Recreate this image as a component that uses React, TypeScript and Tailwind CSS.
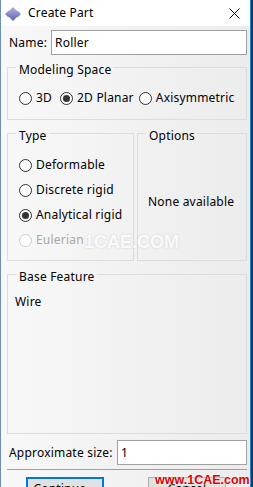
import React from 'react';

type RadioProps = { label: string; checked?: boolean; disabled?: boolean };

function Radio({ label, checked, disabled }: RadioProps) {
  return (
    <div className="flex items-center h-[16px] gap-[4px]">
      <span
        className={`w-[13px] h-[13px] rounded-full border bg-white flex items-center justify-center shrink-0 ${
          disabled ? 'border-[#cccccc]' : 'border-[#333333]'
        }`}
      >
        {checked && <span className="w-[7px] h-[7px] rounded-full bg-[#333333]" />}
      </span>
      <span className={`whitespace-nowrap ${disabled ? 'text-[#a8a8a8]' : 'text-black'}`}>{label}</span>
    </div>
  );
}

function Legend({ children }: { children: React.ReactNode }) {
  return <legend className="pl-[3px] pr-[2px] pt-[6px] leading-[16px] text-black">{children}</legend>;
}

function PartIcon() {
  return (
    <svg width="16" height="14" viewBox="0 0 16 14">
      <defs>
        <linearGradient id="pg" x1="0" y1="0" x2="0" y2="1">
          <stop offset="0" stopColor="#b0b0e6" />
          <stop offset="1" stopColor="#6464aa" />
        </linearGradient>
      </defs>
      <polygon points="8,0 12,4 13,4 16,7 13,10 12,10 8,14 4,10 3,10 0,7 3,4 4,4" fill="url(#pg)" />
    </svg>
  );
}

export default function App() {
  return (
    <div className="w-[253px] h-[487px] overflow-hidden flex bg-[#2b3648] font-['Noto_Sans',sans-serif] text-[12px] tracking-[0.2px]">
      <div className="w-[251px] h-full border-l border-r border-l-[#6d8fb5] border-r-[#1883d7] bg-linear-to-r from-[#f8f8f8] to-[#ececec] flex flex-col relative">
        {/* title bar */}
        <div className="h-[26px] bg-white flex items-center shrink-0">
          <div className="ml-[4px] mt-[1px]">
            <PartIcon />
          </div>
          <span className="ml-[7px] text-black">Create Part</span>
          <svg className="ml-auto mr-[10px]" width="11" height="11" viewBox="0 0 11 11">
            <path d="M0.5 0.5 L10.5 10.5 M10.5 0.5 L0.5 10.5" stroke="#000" strokeWidth="1" />
          </svg>
        </div>

        <div className="pl-[6px] flex flex-col">
          {/* name */}
          <div className="mt-[4px] h-[25px] flex items-center">
            <span className="ml-[2px] text-black">Name:</span>
            <div className="ml-[4px] w-[196px] h-[25px] bg-white border border-[#a0a0a0] flex items-center pl-[3px] text-black">
              Roller
            </div>
          </div>

          {/* modeling space */}
          <fieldset className="mt-[1px] w-[240px] h-[64px] border border-[#dcdcdc] pl-[8px]">
            <Legend>Modeling Space</Legend>
            <div className="flex items-center pt-[12px] pl-[3px]">
              <Radio label="3D" />
              <div className="ml-[8px]">
                <Radio label="2D Planar" checked />
              </div>
              <div className="ml-[5px]">
                <Radio label="Axisymmetric" />
              </div>
            </div>
          </fieldset>

          {/* type / options */}
          <div className="mt-[2px] flex gap-[3px]">
            <fieldset className="w-[127px] h-[139px] border border-[#dcdcdc] pl-[8px]">
              <Legend>Type</Legend>
              <div className="flex flex-col gap-[9px] pt-[13px] pl-[3px]">
                <Radio label="Deformable" />
                <Radio label="Discrete rigid" />
                <Radio label="Analytical rigid" checked />
                <Radio label="Eulerian" disabled />
              </div>
            </fieldset>
            <fieldset className="w-[110px] h-[139px] border border-[#dcdcdc] pl-[8px]">
              <Legend>Options</Legend>
              <div className="pt-[50px] pl-[2px] leading-[16px] text-black whitespace-nowrap">None available</div>
            </fieldset>
          </div>

          {/* base feature */}
          <fieldset className="mt-[2px] w-[240px] h-[171px] border border-[#dcdcdc] pl-[8px]">
            <Legend>Base Feature</Legend>
            <div className="pt-[9px] -ml-[1px] leading-[16px] text-black">Wire</div>
          </fieldset>

          {/* approximate size */}
          <div className="mt-[6px] h-[25px] flex items-center">
            <span className="ml-[2px] text-black">Approximate size:</span>
            <div className="ml-auto mr-[3px] w-[130px] h-[25px] bg-white border border-[#a0a0a0] flex items-center pl-[3px] text-black">
              1
            </div>
          </div>

          <div className="mt-[4px] w-[240px] h-px bg-[#a0a0a0]" />

          {/* buttons */}
          <div className="mt-[7px] flex">
            <div className="ml-[19px] w-[78px] h-[23px] border-2 border-[#0078d7] bg-[#e1e1e1] flex items-center justify-center text-black">
              Continue...
            </div>
            <div className="ml-[44px] w-[78px] h-[23px] border border-[#adadad] bg-[#e1e1e1] flex items-center justify-center text-black">
              Cancel
            </div>
          </div>
        </div>

        {/* watermarks */}
        <span className="absolute left-[83px] top-[229px] font-['Liberation_Sans',sans-serif] font-bold text-[18px] tracking-normal text-white/90 [text-shadow:0_0_2px_#c8c8c8] pointer-events-none">
          1CAE.COM
        </span>
        <span className="absolute left-[154px] top-[471px] font-['Liberation_Sans',sans-serif] font-bold text-[12.5px] tracking-normal text-[#e00000] [text-shadow:0_0_2px_#ffffff,0_0_2px_#ffffff] pointer-events-none">
          www.1CAE.com
        </span>
      </div>
    </div>
  );
}
